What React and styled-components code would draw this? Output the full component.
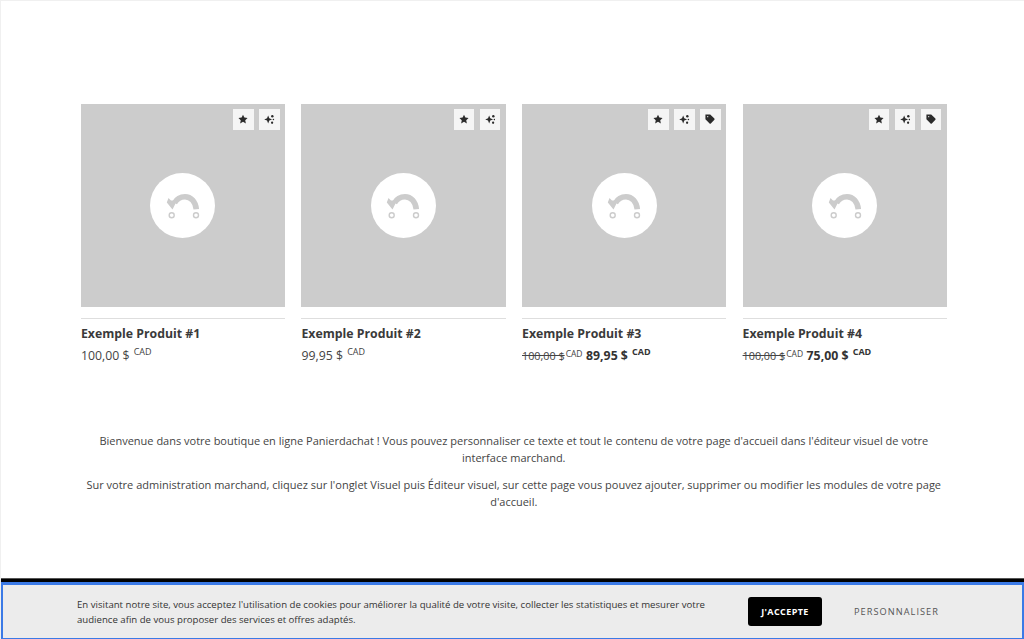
import styled, { createGlobalStyle } from "styled-components"

const products = [
  { name: "Exemple Produit #1", price: "100,00 $", tag: false },
  { name: "Exemple Produit #2", price: "99,95 $", tag: false },
  { name: "Exemple Produit #3", oldPrice: "100,00 $", price: "89,95 $", tag: true },
  { name: "Exemple Produit #4", oldPrice: "100,00 $", price: "75,00 $", tag: true },
]

const StarIcon = () => (
  <svg width="10" height="10" viewBox="0 0 24 24" fill="#2b2b2b">
    <path d="M12 1.5l3.300 7 7.700 1-5.600 5.300 1.400 7.700L12 18.800l-6.800 3.700 1.400-7.700L1 9.500l7.700-1z" />
  </svg>
)

const SparkIcon = () => (
  <svg width="10.500" height="10.500" viewBox="0 0 24 24" fill="#2b2b2b">
    <path d="M9.500 3.500l2.600 6.400 6.400 2.600-6.400 2.600-2.600 6.400-2.600-6.400L.5 12.500l6.400-2.600z" />
    <circle cx="19" cy="5" r="2.800" />
    <circle cx="21.500" cy="12.500" r="1.800" />
    <circle cx="18.500" cy="20" r="2.600" />
  </svg>
)

const TagIcon = () => (
  <svg width="10" height="10" viewBox="0 0 24 24" fill="#2b2b2b">
    <path d="M1 1h11.500L22.500 11c.8.800.8 2.200 0 3l-8.500 8.500c-.8.800-2.200.8-3 0L1 12.500zM6.500 5a1.500 1.500 0 1 0 0 3 1.500 1.500 0 0 0 0-3z" />
  </svg>
)

const PlaceholderIcon = () => (
  <svg width="38" height="30" viewBox="0 0 38 30" fill="none">
    <path d="M10.500 12C13 7.500 17 5.800 21 5.800c6 0 10.500 5 11.300 12.400" stroke="#cccccc" strokeWidth="5.600" />
    <path d="M4.500 7L7 9.500 13 9.500 8.500 18.500 2.800 11.500z" fill="#cccccc" />
    <circle cx="7.700" cy="24.300" r="2.500" stroke="#cccccc" strokeWidth="1.400" />
    <circle cx="32" cy="24.300" r="2.500" stroke="#cccccc" strokeWidth="1.400" />
  </svg>
)

const App = () => {
  return (
    <Page>
      <GlobalStyle />
      <Main>
        <Grid>
          {products.map((p) => (
            <Card key={p.name}>
              <Thumb>
                <Badges>
                  <Badge><StarIcon /></Badge>
                  <Badge><SparkIcon /></Badge>
                  {p.tag && <Badge><TagIcon /></Badge>}
                </Badges>
                <Circle><PlaceholderIcon /></Circle>
              </Thumb>
              <Divider />
              <Title>{p.name}</Title>
              <PriceRow>
                {p.oldPrice && (
                  <OldPrice>
                    <Struck>{p.oldPrice}</Struck>
                    <OldCad>CAD</OldCad>
                  </OldPrice>
                )}
                <Price $sale={!!p.oldPrice}>
                  {p.price} <Cad>CAD</Cad>
                </Price>
              </PriceRow>
            </Card>
          ))}
        </Grid>
        <Welcome>
          <p>Bienvenue dans votre boutique en ligne Panierdachat ! Vous pouvez personnaliser ce texte et tout le contenu de votre page d'accueil dans l'éditeur visuel de votre interface marchand.</p>
          <p>Sur votre administration marchand, cliquez sur l'onglet Visuel puis Éditeur visuel, sur cette page vous pouvez ajouter, supprimer ou modifier les modules de votre page d'accueil.</p>
        </Welcome>
      </Main>
      <CookieBar>
        <CookieInner>
          <CookieText>En visitant notre site, vous acceptez l'utilisation de cookies pour améliorer la qualité de votre visite, collecter les statistiques et mesurer votre audience afin de vous proposer des services et offres adaptés.</CookieText>
          <AcceptButton>J'ACCEPTE</AcceptButton>
          <CustomizeButton>PERSONNALISER</CustomizeButton>
        </CookieInner>
      </CookieBar>
    </Page>
  )
}

export default App

const GlobalStyle = createGlobalStyle`
    html, body {
        margin: 0;
        padding: 0;
        background: #fff;
    }
    * {
        box-sizing: border-box;
    }
`

const Page = styled.div`
    height: 639px;
    overflow: hidden;
    display: flex;
    flex-direction: column;
    justify-content: space-between;
    border-left: 1px solid #f0f0f0;
    border-top: 1px solid #f0f0f0;
    font-family: "Open Sans", sans-serif;
    color: #3a3a3a;
`

const Main = styled.main`
    padding: 103px 77.4px 0 79.9px;
`

const Grid = styled.div`
    display: grid;
    grid-template-columns: repeat(4, 1fr);
    column-gap: 16.5px;
`

const Card = styled.article`
    display: flex;
    flex-direction: column;
`

const Thumb = styled.div`
    position: relative;
    height: 203px;
    background: #cccccc;
    display: flex;
    align-items: center;
    justify-content: center;
`

const Badges = styled.div`
    position: absolute;
    top: 5px;
    right: 5.4px;
    display: flex;
    gap: 5.4px;
`

const Badge = styled.span`
    width: 20.6px;
    height: 20.6px;
    background: #f5f5f5;
    display: flex;
    align-items: center;
    justify-content: center;
`

const Circle = styled.div`
    width: 65px;
    height: 65px;
    border-radius: 50%;
    background: #fff;
    display: flex;
    align-items: center;
    justify-content: center;
`

const Divider = styled.div`
    height: 1px;
    background: #dedede;
    margin: 11px 0 6px;
`

const Title = styled.h3`
    margin: 0;
    font-size: 12.3px;
    line-height: 18px;
    font-weight: 700;
    color: #3a3a3a;
`

const PriceRow = styled.div`
    display: flex;
    align-items: baseline;
    gap: 3.5px;
    margin-top: 4px;
    line-height: 18px;
`

const OldPrice = styled.span`
    font-size: 10.8px;
    color: #444;
`

const Struck = styled.s`
    text-decoration: line-through;
`

const OldCad = styled.sup`
    font-size: 8.5px;
    line-height: 0;
    vertical-align: 3px;
    margin-left: 1px;
`

const Price = styled.span`
    font-size: 12.3px;
    font-weight: ${(p) => (p.$sale ? 700 : 400)};
    color: ${(p) => (p.$sale ? "#333" : "#444")};
`

const Cad = styled.sup`
    font-size: 9px;
    line-height: 0;
    vertical-align: 5px;
    margin-left: 1px;
`

const Welcome = styled.section`
    margin-top: 67px;
    text-align: center;
    font-size: 11px;
    line-height: 17px;
    color: #444;

    p {
        margin: 0 0 10px;
    }
`

const CookieBar = styled.aside`
    flex-shrink: 0;
    height: 61px;
    margin-left: -1px;
    border-top: 1px solid #555;
    background: #000;
    padding-top: 3px;
`

const CookieInner = styled.div`
    height: 57px;
    margin-left: 1px;
    background: #ececec;
    border: 2px solid #3b7ae6;
    border-top-width: 3px;
    border-bottom-width: 1px;
    display: flex;
    align-items: center;
    padding: 0 0 0 74px;
`

const CookieText = styled.p`
    margin: 1px 0 0;
    width: 640px;
    font-size: 9.62px;
    line-height: 15px;
    color: #333;
`

const AcceptButton = styled.button`
    margin-left: 31px;
    width: 74px;
    height: 29px;
    background: #000;
    color: #fff;
    border: none;
    border-radius: 3px;
    font-family: inherit;
    font-size: 9px;
    font-weight: 700;
    letter-spacing: 0.4px;
`

const CustomizeButton = styled.button`
    margin-left: 32px;
    background: none;
    border: none;
    padding: 0;
    color: #555;
    font-family: inherit;
    font-size: 9.2px;
    letter-spacing: 1.05px;
`
